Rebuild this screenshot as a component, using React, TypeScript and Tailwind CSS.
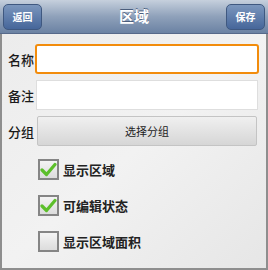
import React from "react";

const font = { fontFamily: '"Noto Sans CJK SC", "Noto Sans", sans-serif' };

function Check({ checked, label }: { checked: boolean; label: string }) {
  return (
    <div className="flex items-center h-[21px] pl-[30px]">
      <div className="w-[21px] h-[21px] border-2 border-[#858585] bg-gradient-to-b from-[#f4f4f4] to-[#dcdcdc] flex items-center justify-center">
        {checked && (
          <svg width="17" height="15" viewBox="0 0 17 15">
            <path d="M2 8 L6.5 12.5 L15 2.5" fill="none" stroke="#5cbf2a" strokeWidth="3.2" strokeLinecap="round" strokeLinejoin="round" />
          </svg>
        )}
      </div>
      <span className="ml-[4px] text-[13px] font-bold text-[#222] leading-none">{label}</span>
    </div>
  );
}

export default function App() {
  return (
    <div className="w-[268px] h-[270px] flex flex-col overflow-hidden" style={font}>
      <div className="h-[34px] shrink-0 flex items-center justify-between px-[3px] bg-gradient-to-b from-[#c6d0dd] via-[#8fa1ba] to-[#6b82a3] border-b border-[#56698a]">
        <div className="w-[39px] h-[26px] rounded-[5px] bg-gradient-to-b from-[#7b96bd] to-[#46669a] border border-[#3f5880] flex items-center justify-center text-white text-[10px] font-bold">返回</div>
        <div className="text-white text-[15px] font-bold [text-shadow:0_-1px_0_#4a5d7c]">区域</div>
        <div className="w-[39px] h-[26px] rounded-[5px] bg-gradient-to-b from-[#7b96bd] to-[#46669a] border border-[#3f5880] flex items-center justify-center text-white text-[10px] font-bold">保存</div>
      </div>
      <div className="flex-1 border-l-2 border-r-2 border-b-2 border-[#8e8e8e] bg-gradient-to-br from-[#ececec] via-[#f2f2f2] to-[#e6e6e6] flex flex-col pt-[10px] pl-[6px] pr-[7px]">
        <div className="flex items-center h-[30px]">
          <span className="w-[27px] text-[13px] text-[#1a1a1a] font-medium leading-none">名称</span>
          <div className="flex-1 h-[30px] border-2 border-[#f28c0c] rounded-[3px] bg-white"></div>
        </div>
        <div className="flex items-center h-[30px] mt-[6px]">
          <span className="w-[27px] text-[13px] text-[#1a1a1a] font-medium leading-none">备注</span>
          <div className="flex-1 h-[30px] mx-[1px] border border-[#dedede] bg-white"></div>
        </div>
        <div className="flex items-center h-[30px] mt-[6px]">
          <span className="w-[27px] text-[13px] text-[#1a1a1a] font-medium leading-none">分组</span>
          <div className="flex-1 h-[30px] mx-[2px] border border-[#c4c4c4] rounded-[2px] bg-gradient-to-b from-[#f0f0f0] to-[#d6d6d6] flex items-center justify-center text-[11px] text-[#222]">选择分组</div>
        </div>
        <div className="mt-[13px] flex flex-col gap-[15px]">
          <Check checked label="显示区域" />
          <Check checked label="可编辑状态" />
          <Check checked={false} label="显示区域面积" />
        </div>
      </div>
    </div>
  );
}
